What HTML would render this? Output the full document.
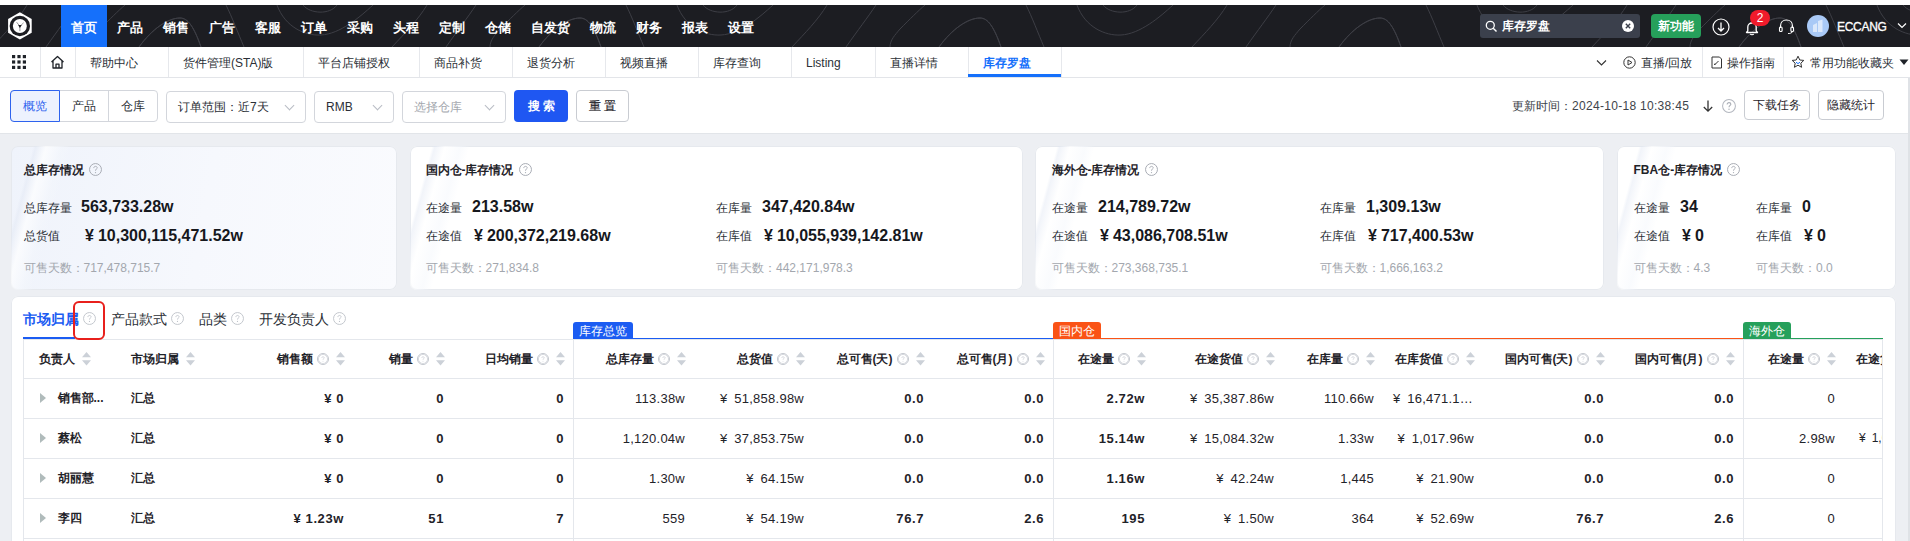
<!DOCTYPE html>
<html><head><meta charset="utf-8">
<style>
*{box-sizing:border-box;margin:0;padding:0}
html,body{width:1910px;height:541px;overflow:hidden}
body{position:relative;background:#edeff3;font-family:"Liberation Sans",sans-serif;color:#1f2329;font-size:12px}
.abs{position:absolute}
#top{left:0;top:0;width:1910px;height:5px;background:#fff}
#nav{left:0;top:5px;width:1910px;height:42px;background:#1c1d22;overflow:hidden}
#nav .items{position:absolute;left:61px;top:0;height:42px;display:flex}
#nav .items div{height:42px;line-height:45px;padding:0 10px;color:#fff;font-size:13px;font-weight:bold;white-space:nowrap}
#nav .items div.on{background:#1570fb}
#tabs{left:0;top:47px;width:1910px;height:31px;background:#fff;border-bottom:1px solid #e3e5e9}
#tabs .t{position:absolute;top:0;height:30px;line-height:32px;padding-left:15px;font-size:12px;color:#2b2f36;border-right:1px solid #e6e8ec;white-space:nowrap}
#tabs .t.on{color:#1570fb;font-weight:bold}
#filter{left:0;top:78px;width:1908px;height:56px;background:#fff;border-bottom:1px solid #e2e5e9}
#rstrip{left:1908px;top:78px;width:2px;height:541px;background:#dfe2e6}
.card{position:absolute;top:146px;height:144px;background:#fff;border-radius:7px;overflow:hidden;box-shadow:inset 0 0 0 1px #e6e9ee}
.card .ttl{position:absolute;left:15px;top:15px;font-size:12px;font-weight:bold;color:#1f2329;white-space:nowrap}
.lbl{position:absolute;font-size:12px;color:#2b2f36;white-space:nowrap}
.val{position:absolute;font-size:16px;font-weight:bold;color:#16181d;white-space:nowrap}
.sub{position:absolute;font-size:12px;color:#a3a7ae;white-space:nowrap}
.help{display:inline-block;width:12px;height:12px;border:1px solid #b9bdc5;border-radius:50%;font-size:9px;line-height:10px;text-align:center;color:#b9bdc5;vertical-align:middle;font-weight:normal}
.sel{height:32px;border:1px solid #d3d6dc;border-radius:4px;background:#fff;line-height:30px;padding-left:11px;font-size:12px;color:#2b2f36;white-space:nowrap}
.sel:after{content:"";position:absolute;right:12px;top:10px;width:6px;height:6px;border-right:1px solid #b8bcc4;border-bottom:1px solid #b8bcc4;transform:rotate(45deg)}
.btn{height:30px;border:1px solid #c9ccd2;border-radius:4px;background:#fff;line-height:28px;text-align:center;font-size:12px;color:#1f2329}
.lbl,.sub,.ttl{line-height:16px}
.val{line-height:20px}
.streak{position:absolute;left:22px;top:0;width:38px;height:144px;transform:skewX(-15deg);transform-origin:0 0;background:linear-gradient(90deg,rgba(225,231,243,0) 0%,rgba(225,231,243,.45) 8%,rgba(255,255,255,.7) 35%,rgba(244,247,252,.5) 75%,rgba(225,231,243,0) 100%)}
.tclip{position:absolute;overflow:hidden}
.th{position:absolute;top:0;height:39px;padding-top:1px;display:flex;align-items:center;font-size:12px;font-weight:bold;color:#1f2329;white-space:nowrap}
.th.l{padding-left:16px}
.th.r{justify-content:flex-end;padding-right:8px}
.th .srt{margin-left:7px}
.hq{display:inline-block;width:12px;height:12px;border:1px solid #c3c7ce;border-radius:50%;position:relative;margin-left:4.5px}
.hq:after{content:"?";position:absolute;left:0;top:0;width:10px;height:10px;font-size:8px;line-height:10px;text-align:center;color:#b5bac2;font-weight:normal}
.hq.big{position:absolute;width:13px;height:13px;margin:0}
.hq.big:after{width:11px;height:11px;line-height:11px;font-size:9px}
.td{position:absolute;height:40px;line-height:41px;font-size:13px;color:#1f2329;white-space:nowrap;overflow:hidden;text-overflow:ellipsis}
.td.b{font-weight:bold}
.td.r{text-align:right;padding-right:9px;padding-left:10px}
.td.l{padding-left:16px;font-size:12px}
.tri{display:inline-block;width:0;height:0;border-left:6px solid #b0bbbb;border-top:5px solid transparent;border-bottom:5px solid transparent;margin-left:1px;margin-right:11.5px;vertical-align:-1px}
.hl{position:absolute;left:0;width:100%;height:1px;background:#e4e7ec}
.vl{position:absolute;top:0;width:1px;height:100%;background:#e4e7ec}
.gtag{position:absolute;top:26px;height:17px;line-height:19px;padding:0 6px;color:#fff;font-size:12px;border-radius:3px 3px 0 0;white-space:nowrap}
.gline{position:absolute;top:41.5px;height:1.5px}
.ttab{position:absolute;top:15px;line-height:16px;font-size:14px;color:#2b2f36;white-space:nowrap}
.ttab.on{color:#1b5cf2;font-weight:bold}
.redbox{position:absolute;width:31.5px;height:39.5px;border:2.6px solid #e8201c;border-radius:6px}
.hq{margin-left:4.5px;display:block}
.hqb{position:absolute}
.hc{margin-left:5px;vertical-align:-2px}
.td.r{letter-spacing:0.25px}
.td.r.b{letter-spacing:0.6px}
.yen{margin-right:4px}
</style></head><body>
<div id="top" class="abs"></div>
<div id="nav" class="abs">
  <svg class="abs" style="left:0;top:0" width="1910" height="42" viewBox="0 0 1910 42" fill="none" stroke="#3d3e45" stroke-width="1">
    <defs><g id="tile">
      <path d="M359 42 C372 24 388 13 400 13 C408 13 414 22 421 42"/>
      <path d="M-41 42 C-28 24 -12 13 0 13 C8 13 14 22 21 42"/>
      <path d="M46 0 C52 12 58 28 64 42"/>
      <path d="M123 0 C130 9 150 10 157 0"/>
      <path d="M97 0 C105 22 125 31 141 30 C160 29 180 12 193 0"/>
      <path d="M212 42 C225 28 238 15 247 0"/>
      <path d="M266 42 C278 25 288 12 296 0"/>
      <path d="M310 42 C310 35 315 30 320 24 C330 14 338 6 345 0"/>
    </g></defs>
    <use href="#tile" x="-620"/><use href="#tile" x="-220"/><use href="#tile" x="180"/><use href="#tile" x="580"/><use href="#tile" x="980"/><use href="#tile" x="1380"/><use href="#tile" x="1780"/>
  </svg>
  <svg class="abs" style="left:0;top:0" width="40" height="42" viewBox="0 0 40 42">
    <polygon points="19.9,7.3 31.7,14.1 31.7,27.7 19.9,34.5 8.1,27.7 8.1,14.1" fill="#fff"/>
    <circle cx="19.85" cy="21" r="10.2" fill="#1c1d22"/>
    <circle cx="19.85" cy="21" r="7" fill="#fff"/>
    <path d="M19.9 21.3 L16.6 17.2 M19.9 21.3 L23.6 17.8 M19.9 21.3 L19.9 26.2" stroke="#1c1d22" stroke-width="0.9" stroke-opacity="0.5" fill="none"/>
    <polygon points="18.2,20 21.7,20 19.9,23" fill="#1c1d22"/>
  </svg>
  <div class="items">
    <div class="on">首页</div><div>产品</div><div>销售</div><div>广告</div><div>客服</div><div>订单</div><div>采购</div><div>头程</div><div>定制</div><div>仓储</div><div>自发货</div><div>物流</div><div>财务</div><div>报表</div><div>设置</div>
  </div>
</div>
<div id="navr" class="abs" style="left:0;top:5px;width:1910px;height:42px">
  <div class="abs" style="left:1480px;top:9px;width:160px;height:24px;background:#3b404c;border-radius:3px"></div>
  <svg class="abs" style="left:1485px;top:15px" width="13" height="13" viewBox="0 0 13 13"><circle cx="5.3" cy="5.3" r="4" fill="none" stroke="#fff" stroke-width="1.3"/><path d="M8.2 8.2 L11.5 11.5" stroke="#fff" stroke-width="1.4"/></svg>
  <div class="abs" style="left:1502px;top:13px;font-size:12px;color:#fff;line-height:16px;font-weight:bold">库存罗盘</div>
  <svg class="abs" style="left:1621px;top:14px" width="14" height="14" viewBox="0 0 14 14"><circle cx="7" cy="7" r="6" fill="#fff"/><path d="M4.8 4.8 L9.2 9.2 M9.2 4.8 L4.8 9.2" stroke="#3b404c" stroke-width="1.4"/></svg>
  <div class="abs" style="left:1651px;top:9px;width:50px;height:24px;background:#26a05b;border-radius:4px;color:#fff;font-size:12px;line-height:24px;text-align:center;font-weight:bold">新功能</div>
  <svg class="abs" style="left:1712px;top:13px" width="18" height="18" viewBox="0 0 18 18"><circle cx="9" cy="9" r="8" fill="none" stroke="#fff" stroke-width="1.2"/><path d="M9 4.5 V13 M6 10 L9 13 L12 10" fill="none" stroke="#fff" stroke-width="1.3"/></svg>
  <svg class="abs" style="left:1744px;top:15px" width="16" height="16" viewBox="0 0 16 16"><path d="M2.5 12.5 H13.5 L12.2 10.8 V7 C12.2 4.6 10.5 3 8 3 C5.5 3 3.8 4.6 3.8 7 V10.8 Z" fill="none" stroke="#fff" stroke-width="1.3" stroke-linejoin="round"/><path d="M6.3 14 C6.8 15 9.2 15 9.7 14" fill="none" stroke="#fff" stroke-width="1.2"/></svg>
  <div class="abs" style="left:1750px;top:5px;width:20px;height:16px;background:#f01b2b;border-radius:8px;color:#fff;font-size:12px;line-height:16px;text-align:center">2</div>
  <svg class="abs" style="left:1778px;top:13px" width="17" height="17" viewBox="0 0 17 17"><path d="M2.5 10 V8 C2.5 4.5 5 2 8.5 2 C12 2 14.5 4.5 14.5 8 V10" fill="none" stroke="#fff" stroke-width="1.2"/><rect x="1.5" y="9" width="2.6" height="4.5" rx="1" fill="none" stroke="#fff" stroke-width="1.1"/><rect x="12.9" y="9" width="2.6" height="4.5" rx="1" fill="none" stroke="#fff" stroke-width="1.1"/><path d="M14.2 13.5 C14 15 12 15.5 10 15.5" fill="none" stroke="#fff" stroke-width="1.1"/></svg>
  <svg class="abs" style="left:1807px;top:10px" width="22" height="22" viewBox="0 0 22 22"><circle cx="11" cy="11" r="11" fill="#a9c9f6"/><path d="M6 17 V10 L10 8 V17 Z M11 17 V6 L15.5 4.5 V17 Z" fill="#dbe8fb"/></svg>
  <div class="abs" style="left:1837px;top:14px;font-size:12px;letter-spacing:-0.3px;color:#fff;line-height:16px;-webkit-text-stroke:0.3px #fff">ECCANG</div>
  <svg class="abs" style="left:1897px;top:17px" width="10" height="8" viewBox="0 0 10 8"><path d="M1 1.5 L5 5.5 L9 1.5" fill="none" stroke="#fff" stroke-width="1.2"/></svg>
</div>
<div id="tabs" class="abs">
  <div class="t" style="left:0px;width:41px"></div>
  <div class="t" style="left:40px;width:36px"></div>
  <div class="t" style="left:75px;width:94px">帮助中心</div>
  <div class="t" style="left:168px;width:136px">货件管理(STA)版</div>
  <div class="t" style="left:303px;width:117px">平台店铺授权</div>
  <div class="t" style="left:419px;width:94px">商品补货</div>
  <div class="t" style="left:512px;width:94px">退货分析</div>
  <div class="t" style="left:605px;width:94px">视频直播</div>
  <div class="t" style="left:698px;width:94px">库存查询</div>
  <div class="t" style="left:791px;width:85px">Listing</div>
  <div class="t" style="left:875px;width:94px">直播详情</div>
  <div class="t on" style="left:968px;width:94px">库存罗盘</div>
</div>
<div id="tabsx" class="abs" style="left:0;top:47px;width:1910px;height:31px">
  <svg class="abs" style="left:12px;top:8px" width="14" height="14" viewBox="0 0 14 14" fill="#1f2329"><rect x="0" y="0" width="3.2" height="3.2"/><rect x="5.4" y="0" width="3.2" height="3.2"/><rect x="10.8" y="0" width="3.2" height="3.2"/><rect x="0" y="5.4" width="3.2" height="3.2"/><rect x="5.4" y="5.4" width="3.2" height="3.2"/><rect x="10.8" y="5.4" width="3.2" height="3.2"/><rect x="0" y="10.8" width="3.2" height="3.2"/><rect x="5.4" y="10.8" width="3.2" height="3.2"/><rect x="10.8" y="10.8" width="3.2" height="3.2"/></svg>
  <svg class="abs" style="left:50px;top:8px" width="15" height="14" viewBox="0 0 15 14"><path d="M1.5 7 L7.5 1.5 L13.5 7 M3 5.8 V13 H12 V5.8 M6 13 V9.2 H9 V13" fill="none" stroke="#1f2329" stroke-width="1.3" stroke-linejoin="round"/></svg>
  <div class="abs" style="left:968px;top:27px;width:93px;height:3px;background:#1570fb"></div>
  <svg class="abs" style="left:1596px;top:12px" width="11" height="8" viewBox="0 0 11 8"><path d="M1 1.5 L5.5 6 L10 1.5" fill="none" stroke="#333" stroke-width="1.1"/></svg>
  <svg class="abs" style="left:1623px;top:9px" width="13" height="13" viewBox="0 0 13 13"><circle cx="6.5" cy="6.5" r="5.7" fill="none" stroke="#333" stroke-width="1"/><path d="M5 4 L9 6.5 L5 9 Z" fill="none" stroke="#333" stroke-width="1"/></svg>
  <div class="abs" style="left:1641px;top:8px;font-size:12px;color:#2b2f36;line-height:16px">直播/回放</div>
  <div class="abs" style="left:1702px;top:0;width:1px;height:30px;background:#e6e8ec"></div>
  <svg class="abs" style="left:1710px;top:9px" width="13" height="13" viewBox="0 0 13 13"><path d="M2 1 H9.5 L11.5 3 V12 H2 Z" fill="none" stroke="#333" stroke-width="1"/><path d="M4.5 9 L8.5 5 M4.5 9 L5 7.5" fill="none" stroke="#333" stroke-width="1"/></svg>
  <div class="abs" style="left:1727px;top:8px;font-size:12px;color:#2b2f36;line-height:16px">操作指南</div>
  <div class="abs" style="left:1783px;top:0;width:1px;height:30px;background:#e6e8ec"></div>
  <svg class="abs" style="left:1791px;top:8px" width="14" height="14" viewBox="0 0 14 14"><path d="M7 1.2 L8.8 5 L12.8 5.4 L9.8 8.2 L10.6 12.3 L7 10.2 L3.4 12.3 L4.2 8.2 L1.2 5.4 L5.2 5 Z" fill="none" stroke="#333" stroke-width="1" stroke-linejoin="round"/><path d="M5 7.2 L7 8.6 L9 7.2" fill="none" stroke="#1570fb" stroke-width="1"/></svg>
  <div class="abs" style="left:1810px;top:8px;font-size:12px;color:#2b2f36;line-height:16px">常用功能收藏夹</div>
  <svg class="abs" style="left:1899px;top:12px" width="10" height="7" viewBox="0 0 10 7"><path d="M0.5 0.5 H9.5 L5 6 Z" fill="#1f2329"/></svg>
</div>
<div id="filter" class="abs">
  <div class="abs" style="left:10px;top:12px;width:148px;height:32px;border:1px solid #d3d6dc;border-radius:4px;background:#fff"></div>
  <div class="abs" style="left:10px;top:12px;width:50px;height:32px;border:1px solid #2e63ee;border-radius:4px 0 0 4px;background:#edf2fe;color:#2e63ee;text-align:center;line-height:30px;font-size:12px">概览</div>
  <div class="abs" style="left:60px;top:13px;width:48px;height:30px;color:#2b2f36;text-align:center;line-height:30px;font-size:12px">产品</div>
  <div class="abs" style="left:108px;top:13px;width:1px;height:30px;background:#d3d6dc"></div>
  <div class="abs" style="left:109px;top:13px;width:48px;height:30px;color:#2b2f36;text-align:center;line-height:30px;font-size:12px">仓库</div>
  <div class="abs sel" style="left:166px;top:13px;width:140px">订单范围：近7天</div>
  <div class="abs sel" style="left:314px;top:13px;width:80px">RMB</div>
  <div class="abs sel" style="left:402px;top:13px;width:104px;color:#a3a7ae">选择仓库</div>
  <div class="abs" style="left:514px;top:12px;width:54px;height:32px;background:#1f57f2;border-radius:4px;color:#fff;text-align:center;line-height:32px;font-size:12px;font-weight:bold;letter-spacing:3px;text-indent:3px">搜索</div>
  <div class="abs" style="left:576px;top:12px;width:53px;height:32px;border:1px solid #c9ccd2;border-radius:4px;color:#1f2329;text-align:center;line-height:30px;font-size:12px;letter-spacing:3px;text-indent:3px;-webkit-text-stroke:0.2px #1f2329">重置</div>
  <div class="abs" style="left:1512px;top:20px;font-size:12px;color:#40444b;line-height:16px">更新时间：<span style="letter-spacing:0.3px">2024-10-18 10:38:45</span></div>
  <svg class="abs" style="left:1702px;top:21px" width="12" height="14" viewBox="0 0 12 14"><path d="M6 1.5 V12 M1.8 8 L6 12.2 L10.2 8" fill="none" stroke="#333" stroke-width="1.3"/></svg>
  <svg class="abs" style="left:1722px;top:21px" width="14" height="14" viewBox="0 0 12 12"><circle cx="6" cy="6" r="5.5" fill="none" stroke="#b3b7bf" stroke-width="0.86"/><path d="M4.4 4.7 C4.4 3.7 5.1 3.1 6 3.1 C6.9 3.1 7.6 3.7 7.6 4.5 C7.6 5.5 6 5.6 6 7.1" fill="none" stroke="#a9adb5" stroke-width="0.9"/><circle cx="6" cy="8.8" r="0.6" fill="#a9adb5"/></svg>
  <div class="abs btn" style="left:1744px;top:12px;width:66px">下载任务</div>
  <div class="abs btn" style="left:1818px;top:12px;width:66px">隐藏统计</div>
</div>
<div id="rstrip" class="abs"></div>

<div class="card" style="left:11px;width:386px;background:linear-gradient(100deg,#eff3fb 0%,#f6f8fd 50%,#fafbfe 100%)">
  <div class="streak"></div>
  <div class="ttl" style="left:12.5px;top:15.5px">总库存情况<svg class="hc" style="" width="13" height="13" viewBox="0 0 12 12"><circle cx="6" cy="6" r="5.5" fill="none" stroke="#a9adb5" stroke-width="0.92"/><path d="M4.4 4.7 C4.4 3.7 5.1 3.1 6 3.1 C6.9 3.1 7.6 3.7 7.6 4.5 C7.6 5.5 6 5.6 6 7.1" fill="none" stroke="#a9adb5" stroke-width="0.9"/><circle cx="6" cy="8.8" r="0.6" fill="#a9adb5"/></svg></div>
  <div class="lbl" style="left:12.5px;top:54px">总库存量</div><div class="val" style="left:70px;top:51px">563,733.28w</div>
  <div class="lbl" style="left:12.5px;top:82px">总货值</div><div class="val" style="left:74px;top:79.5px"><span class="yen">¥</span>10,300,115,471.52w</div>
  <div class="sub" style="left:12.5px;top:114px">可售天数：717,478,715.7</div>
</div>
<div class="card" style="left:410px;width:613px">
  <div class="streak"></div>
  <div class="ttl" style="left:15.5px;top:15.5px">国内仓-库存情况<svg class="hc" style="" width="13" height="13" viewBox="0 0 12 12"><circle cx="6" cy="6" r="5.5" fill="none" stroke="#a9adb5" stroke-width="0.92"/><path d="M4.4 4.7 C4.4 3.7 5.1 3.1 6 3.1 C6.9 3.1 7.6 3.7 7.6 4.5 C7.6 5.5 6 5.6 6 7.1" fill="none" stroke="#a9adb5" stroke-width="0.9"/><circle cx="6" cy="8.8" r="0.6" fill="#a9adb5"/></svg></div>
  <div class="lbl" style="left:15.5px;top:54px">在途量</div><div class="val" style="left:62px;top:51px">213.58w</div>
  <div class="lbl" style="left:15.5px;top:82px">在途值</div><div class="val" style="left:64px;top:79.5px"><span class="yen">¥</span>200,372,219.68w</div>
  <div class="sub" style="left:15.5px;top:114px">可售天数：271,834.8</div>
  <div class="lbl" style="left:306px;top:54px">在库量</div><div class="val" style="left:352px;top:51px">347,420.84w</div>
  <div class="lbl" style="left:306px;top:82px">在库值</div><div class="val" style="left:354px;top:79.5px"><span class="yen">¥</span>10,055,939,142.81w</div>
  <div class="sub" style="left:306px;top:114px">可售天数：442,171,978.3</div>
</div>
<div class="card" style="left:1035px;width:569px">
  <div class="streak"></div>
  <div class="ttl" style="left:16.5px;top:15.5px">海外仓-库存情况<svg class="hc" style="" width="13" height="13" viewBox="0 0 12 12"><circle cx="6" cy="6" r="5.5" fill="none" stroke="#a9adb5" stroke-width="0.92"/><path d="M4.4 4.7 C4.4 3.7 5.1 3.1 6 3.1 C6.9 3.1 7.6 3.7 7.6 4.5 C7.6 5.5 6 5.6 6 7.1" fill="none" stroke="#a9adb5" stroke-width="0.9"/><circle cx="6" cy="8.8" r="0.6" fill="#a9adb5"/></svg></div>
  <div class="lbl" style="left:16.5px;top:54px">在途量</div><div class="val" style="left:63px;top:51px">214,789.72w</div>
  <div class="lbl" style="left:16.5px;top:82px">在途值</div><div class="val" style="left:65px;top:79.5px"><span class="yen">¥</span>43,086,708.51w</div>
  <div class="sub" style="left:16.5px;top:114px">可售天数：273,368,735.1</div>
  <div class="lbl" style="left:284.5px;top:54px">在库量</div><div class="val" style="left:331px;top:51px">1,309.13w</div>
  <div class="lbl" style="left:284.5px;top:82px">在库值</div><div class="val" style="left:333px;top:79.5px"><span class="yen">¥</span>717,400.53w</div>
  <div class="sub" style="left:284.5px;top:114px">可售天数：1,666,163.2</div>
</div>
<div class="card" style="left:1617px;width:279px">
  <div class="streak"></div>
  <div class="ttl" style="left:16.5px;top:15.5px">FBA仓-库存情况<svg class="hc" style="" width="13" height="13" viewBox="0 0 12 12"><circle cx="6" cy="6" r="5.5" fill="none" stroke="#a9adb5" stroke-width="0.92"/><path d="M4.4 4.7 C4.4 3.7 5.1 3.1 6 3.1 C6.9 3.1 7.6 3.7 7.6 4.5 C7.6 5.5 6 5.6 6 7.1" fill="none" stroke="#a9adb5" stroke-width="0.9"/><circle cx="6" cy="8.8" r="0.6" fill="#a9adb5"/></svg></div>
  <div class="lbl" style="left:16.5px;top:54px">在途量</div><div class="val" style="left:63px;top:51px">34</div>
  <div class="lbl" style="left:16.5px;top:82px">在途值</div><div class="val" style="left:65px;top:79.5px"><span class="yen">¥</span>0</div>
  <div class="sub" style="left:16.5px;top:114px">可售天数：4.3</div>
  <div class="lbl" style="left:139px;top:54px">在库量</div><div class="val" style="left:185px;top:51px">0</div>
  <div class="lbl" style="left:139px;top:82px">在库值</div><div class="val" style="left:187px;top:79.5px"><span class="yen">¥</span>0</div>
  <div class="sub" style="left:139px;top:114px">可售天数：0.0</div>
</div>

<div class="card" id="tcard" style="left:11px;top:296px;width:1885px;height:260px">
<div class="tclip" style="left:12.0px;top:43.0px;width:1860.0px;height:202.0px">
<div class="th l" style="left:0.0px;width:92.0px"><span class="ht">负责人</span><svg class="srt" width="9" height="14" viewBox="0 0 9 14"><path d="M4.5 0 L9 5.2 H0 Z M0 8.2 H9 L4.5 13.4 Z" fill="#ccd1d8"/></svg></div>
<div class="th l" style="left:92.0px;width:118.0px"><span class="ht">市场归属</span><svg class="srt" width="9" height="14" viewBox="0 0 9 14"><path d="M4.5 0 L9 5.2 H0 Z M0 8.2 H9 L4.5 13.4 Z" fill="#ccd1d8"/></svg></div>
<div class="th r" style="left:210.0px;width:120.0px"><span class="ht">销售额</span><svg class="hq" width="12" height="12" viewBox="0 0 12 12"><circle cx="6" cy="6" r="5.5" fill="none" stroke="#c8ccd3" stroke-width="0.9"/><path d="M4.5 4.7 C4.5 3.8 5.1 3.2 6 3.2 C6.9 3.2 7.5 3.8 7.5 4.5 C7.5 5.4 6 5.6 6 7" fill="none" stroke="#c8ccd3" stroke-width="0.8"/><circle cx="6" cy="8.7" r="0.55" fill="#c8ccd3"/></svg><svg class="srt" width="9" height="14" viewBox="0 0 9 14"><path d="M4.5 0 L9 5.2 H0 Z M0 8.2 H9 L4.5 13.4 Z" fill="#ccd1d8"/></svg></div>
<div class="th r" style="left:330.0px;width:100.0px"><span class="ht">销量</span><svg class="hq" width="12" height="12" viewBox="0 0 12 12"><circle cx="6" cy="6" r="5.5" fill="none" stroke="#c8ccd3" stroke-width="0.9"/><path d="M4.5 4.7 C4.5 3.8 5.1 3.2 6 3.2 C6.9 3.2 7.5 3.8 7.5 4.5 C7.5 5.4 6 5.6 6 7" fill="none" stroke="#c8ccd3" stroke-width="0.8"/><circle cx="6" cy="8.7" r="0.55" fill="#c8ccd3"/></svg><svg class="srt" width="9" height="14" viewBox="0 0 9 14"><path d="M4.5 0 L9 5.2 H0 Z M0 8.2 H9 L4.5 13.4 Z" fill="#ccd1d8"/></svg></div>
<div class="th r" style="left:430.0px;width:120.0px"><span class="ht">日均销量</span><svg class="hq" width="12" height="12" viewBox="0 0 12 12"><circle cx="6" cy="6" r="5.5" fill="none" stroke="#c8ccd3" stroke-width="0.9"/><path d="M4.5 4.7 C4.5 3.8 5.1 3.2 6 3.2 C6.9 3.2 7.5 3.8 7.5 4.5 C7.5 5.4 6 5.6 6 7" fill="none" stroke="#c8ccd3" stroke-width="0.8"/><circle cx="6" cy="8.7" r="0.55" fill="#c8ccd3"/></svg><svg class="srt" width="9" height="14" viewBox="0 0 9 14"><path d="M4.5 0 L9 5.2 H0 Z M0 8.2 H9 L4.5 13.4 Z" fill="#ccd1d8"/></svg></div>
<div class="th r" style="left:550.0px;width:121.0px"><span class="ht">总库存量</span><svg class="hq" width="12" height="12" viewBox="0 0 12 12"><circle cx="6" cy="6" r="5.5" fill="none" stroke="#c8ccd3" stroke-width="0.9"/><path d="M4.5 4.7 C4.5 3.8 5.1 3.2 6 3.2 C6.9 3.2 7.5 3.8 7.5 4.5 C7.5 5.4 6 5.6 6 7" fill="none" stroke="#c8ccd3" stroke-width="0.8"/><circle cx="6" cy="8.7" r="0.55" fill="#c8ccd3"/></svg><svg class="srt" width="9" height="14" viewBox="0 0 9 14"><path d="M4.5 0 L9 5.2 H0 Z M0 8.2 H9 L4.5 13.4 Z" fill="#ccd1d8"/></svg></div>
<div class="th r" style="left:671.0px;width:119.0px"><span class="ht">总货值</span><svg class="hq" width="12" height="12" viewBox="0 0 12 12"><circle cx="6" cy="6" r="5.5" fill="none" stroke="#c8ccd3" stroke-width="0.9"/><path d="M4.5 4.7 C4.5 3.8 5.1 3.2 6 3.2 C6.9 3.2 7.5 3.8 7.5 4.5 C7.5 5.4 6 5.6 6 7" fill="none" stroke="#c8ccd3" stroke-width="0.8"/><circle cx="6" cy="8.7" r="0.55" fill="#c8ccd3"/></svg><svg class="srt" width="9" height="14" viewBox="0 0 9 14"><path d="M4.5 0 L9 5.2 H0 Z M0 8.2 H9 L4.5 13.4 Z" fill="#ccd1d8"/></svg></div>
<div class="th r" style="left:790.0px;width:120.0px"><span class="ht">总可售(天)</span><svg class="hq" width="12" height="12" viewBox="0 0 12 12"><circle cx="6" cy="6" r="5.5" fill="none" stroke="#c8ccd3" stroke-width="0.9"/><path d="M4.5 4.7 C4.5 3.8 5.1 3.2 6 3.2 C6.9 3.2 7.5 3.8 7.5 4.5 C7.5 5.4 6 5.6 6 7" fill="none" stroke="#c8ccd3" stroke-width="0.8"/><circle cx="6" cy="8.7" r="0.55" fill="#c8ccd3"/></svg><svg class="srt" width="9" height="14" viewBox="0 0 9 14"><path d="M4.5 0 L9 5.2 H0 Z M0 8.2 H9 L4.5 13.4 Z" fill="#ccd1d8"/></svg></div>
<div class="th r" style="left:910.0px;width:120.0px"><span class="ht">总可售(月)</span><svg class="hq" width="12" height="12" viewBox="0 0 12 12"><circle cx="6" cy="6" r="5.5" fill="none" stroke="#c8ccd3" stroke-width="0.9"/><path d="M4.5 4.7 C4.5 3.8 5.1 3.2 6 3.2 C6.9 3.2 7.5 3.8 7.5 4.5 C7.5 5.4 6 5.6 6 7" fill="none" stroke="#c8ccd3" stroke-width="0.8"/><circle cx="6" cy="8.7" r="0.55" fill="#c8ccd3"/></svg><svg class="srt" width="9" height="14" viewBox="0 0 9 14"><path d="M4.5 0 L9 5.2 H0 Z M0 8.2 H9 L4.5 13.4 Z" fill="#ccd1d8"/></svg></div>
<div class="th r" style="left:1030.0px;width:101.0px"><span class="ht">在途量</span><svg class="hq" width="12" height="12" viewBox="0 0 12 12"><circle cx="6" cy="6" r="5.5" fill="none" stroke="#c8ccd3" stroke-width="0.9"/><path d="M4.5 4.7 C4.5 3.8 5.1 3.2 6 3.2 C6.9 3.2 7.5 3.8 7.5 4.5 C7.5 5.4 6 5.6 6 7" fill="none" stroke="#c8ccd3" stroke-width="0.8"/><circle cx="6" cy="8.7" r="0.55" fill="#c8ccd3"/></svg><svg class="srt" width="9" height="14" viewBox="0 0 9 14"><path d="M4.5 0 L9 5.2 H0 Z M0 8.2 H9 L4.5 13.4 Z" fill="#ccd1d8"/></svg></div>
<div class="th r" style="left:1131.0px;width:129.0px"><span class="ht">在途货值</span><svg class="hq" width="12" height="12" viewBox="0 0 12 12"><circle cx="6" cy="6" r="5.5" fill="none" stroke="#c8ccd3" stroke-width="0.9"/><path d="M4.5 4.7 C4.5 3.8 5.1 3.2 6 3.2 C6.9 3.2 7.5 3.8 7.5 4.5 C7.5 5.4 6 5.6 6 7" fill="none" stroke="#c8ccd3" stroke-width="0.8"/><circle cx="6" cy="8.7" r="0.55" fill="#c8ccd3"/></svg><svg class="srt" width="9" height="14" viewBox="0 0 9 14"><path d="M4.5 0 L9 5.2 H0 Z M0 8.2 H9 L4.5 13.4 Z" fill="#ccd1d8"/></svg></div>
<div class="th r" style="left:1260.0px;width:100.0px"><span class="ht">在库量</span><svg class="hq" width="12" height="12" viewBox="0 0 12 12"><circle cx="6" cy="6" r="5.5" fill="none" stroke="#c8ccd3" stroke-width="0.9"/><path d="M4.5 4.7 C4.5 3.8 5.1 3.2 6 3.2 C6.9 3.2 7.5 3.8 7.5 4.5 C7.5 5.4 6 5.6 6 7" fill="none" stroke="#c8ccd3" stroke-width="0.8"/><circle cx="6" cy="8.7" r="0.55" fill="#c8ccd3"/></svg><svg class="srt" width="9" height="14" viewBox="0 0 9 14"><path d="M4.5 0 L9 5.2 H0 Z M0 8.2 H9 L4.5 13.4 Z" fill="#ccd1d8"/></svg></div>
<div class="th r" style="left:1360.0px;width:100.0px"><span class="ht">在库货值</span><svg class="hq" width="12" height="12" viewBox="0 0 12 12"><circle cx="6" cy="6" r="5.5" fill="none" stroke="#c8ccd3" stroke-width="0.9"/><path d="M4.5 4.7 C4.5 3.8 5.1 3.2 6 3.2 C6.9 3.2 7.5 3.8 7.5 4.5 C7.5 5.4 6 5.6 6 7" fill="none" stroke="#c8ccd3" stroke-width="0.8"/><circle cx="6" cy="8.7" r="0.55" fill="#c8ccd3"/></svg><svg class="srt" width="9" height="14" viewBox="0 0 9 14"><path d="M4.5 0 L9 5.2 H0 Z M0 8.2 H9 L4.5 13.4 Z" fill="#ccd1d8"/></svg></div>
<div class="th r" style="left:1460.0px;width:130.0px"><span class="ht">国内可售(天)</span><svg class="hq" width="12" height="12" viewBox="0 0 12 12"><circle cx="6" cy="6" r="5.5" fill="none" stroke="#c8ccd3" stroke-width="0.9"/><path d="M4.5 4.7 C4.5 3.8 5.1 3.2 6 3.2 C6.9 3.2 7.5 3.8 7.5 4.5 C7.5 5.4 6 5.6 6 7" fill="none" stroke="#c8ccd3" stroke-width="0.8"/><circle cx="6" cy="8.7" r="0.55" fill="#c8ccd3"/></svg><svg class="srt" width="9" height="14" viewBox="0 0 9 14"><path d="M4.5 0 L9 5.2 H0 Z M0 8.2 H9 L4.5 13.4 Z" fill="#ccd1d8"/></svg></div>
<div class="th r" style="left:1590.0px;width:130.0px"><span class="ht">国内可售(月)</span><svg class="hq" width="12" height="12" viewBox="0 0 12 12"><circle cx="6" cy="6" r="5.5" fill="none" stroke="#c8ccd3" stroke-width="0.9"/><path d="M4.5 4.7 C4.5 3.8 5.1 3.2 6 3.2 C6.9 3.2 7.5 3.8 7.5 4.5 C7.5 5.4 6 5.6 6 7" fill="none" stroke="#c8ccd3" stroke-width="0.8"/><circle cx="6" cy="8.7" r="0.55" fill="#c8ccd3"/></svg><svg class="srt" width="9" height="14" viewBox="0 0 9 14"><path d="M4.5 0 L9 5.2 H0 Z M0 8.2 H9 L4.5 13.4 Z" fill="#ccd1d8"/></svg></div>
<div class="th r" style="left:1720.0px;width:101.0px"><span class="ht">在途量</span><svg class="hq" width="12" height="12" viewBox="0 0 12 12"><circle cx="6" cy="6" r="5.5" fill="none" stroke="#c8ccd3" stroke-width="0.9"/><path d="M4.5 4.7 C4.5 3.8 5.1 3.2 6 3.2 C6.9 3.2 7.5 3.8 7.5 4.5 C7.5 5.4 6 5.6 6 7" fill="none" stroke="#c8ccd3" stroke-width="0.8"/><circle cx="6" cy="8.7" r="0.55" fill="#c8ccd3"/></svg><svg class="srt" width="9" height="14" viewBox="0 0 9 14"><path d="M4.5 0 L9 5.2 H0 Z M0 8.2 H9 L4.5 13.4 Z" fill="#ccd1d8"/></svg></div>
<div class="th l" style="left:1821.0px;width:129.0px;padding-left:12px"><span class="ht">在途货值</span><svg class="hq" width="12" height="12" viewBox="0 0 12 12"><circle cx="6" cy="6" r="5.5" fill="none" stroke="#c8ccd3" stroke-width="0.9"/><path d="M4.5 4.7 C4.5 3.8 5.1 3.2 6 3.2 C6.9 3.2 7.5 3.8 7.5 4.5 C7.5 5.4 6 5.6 6 7" fill="none" stroke="#c8ccd3" stroke-width="0.8"/><circle cx="6" cy="8.7" r="0.55" fill="#c8ccd3"/></svg><svg class="srt" width="9" height="14" viewBox="0 0 9 14"><path d="M4.5 0 L9 5.2 H0 Z M0 8.2 H9 L4.5 13.4 Z" fill="#ccd1d8"/></svg></div>
<div class="td l b" style="left:0.0px;top:39px;width:92.0px"><span class="tri"></span>销售部...</div>
<div class="td l b" style="left:92.0px;top:39px;width:118.0px">汇总</div>
<div class="td b r" style="left:210.0px;top:39px;width:120.0px">¥ 0</div>
<div class="td b r" style="left:330.0px;top:39px;width:100.0px">0</div>
<div class="td b r" style="left:430.0px;top:39px;width:120.0px">0</div>
<div class="td r" style="left:550.0px;top:39px;width:121.0px">113.38w</div>
<div class="td r" style="left:671.0px;top:39px;width:119.0px">¥&ensp;51,858.98w</div>
<div class="td b r" style="left:790.0px;top:39px;width:120.0px">0.0</div>
<div class="td b r" style="left:910.0px;top:39px;width:120.0px">0.0</div>
<div class="td b r" style="left:1030.0px;top:39px;width:101.0px">2.72w</div>
<div class="td r" style="left:1131.0px;top:39px;width:129.0px">¥&ensp;35,387.86w</div>
<div class="td r" style="left:1260.0px;top:39px;width:100.0px">110.66w</div>
<div class="td r" style="left:1360.0px;top:39px;width:100.0px">¥&ensp;16,471.14w</div>
<div class="td b r" style="left:1460.0px;top:39px;width:130.0px">0.0</div>
<div class="td b r" style="left:1590.0px;top:39px;width:130.0px">0.0</div>
<div class="td r" style="left:1720.0px;top:39px;width:101.0px">0</div>
<div class="td l" style="left:1821.0px;top:39px;width:129.0px;padding-left:15px"></div>
<div class="td l b" style="left:0.0px;top:79px;width:92.0px"><span class="tri"></span>蔡松</div>
<div class="td l b" style="left:92.0px;top:79px;width:118.0px">汇总</div>
<div class="td b r" style="left:210.0px;top:79px;width:120.0px">¥ 0</div>
<div class="td b r" style="left:330.0px;top:79px;width:100.0px">0</div>
<div class="td b r" style="left:430.0px;top:79px;width:120.0px">0</div>
<div class="td r" style="left:550.0px;top:79px;width:121.0px">1,120.04w</div>
<div class="td r" style="left:671.0px;top:79px;width:119.0px">¥&ensp;37,853.75w</div>
<div class="td b r" style="left:790.0px;top:79px;width:120.0px">0.0</div>
<div class="td b r" style="left:910.0px;top:79px;width:120.0px">0.0</div>
<div class="td b r" style="left:1030.0px;top:79px;width:101.0px">15.14w</div>
<div class="td r" style="left:1131.0px;top:79px;width:129.0px">¥&ensp;15,084.32w</div>
<div class="td r" style="left:1260.0px;top:79px;width:100.0px">1.33w</div>
<div class="td r" style="left:1360.0px;top:79px;width:100.0px">¥&ensp;1,017.96w</div>
<div class="td b r" style="left:1460.0px;top:79px;width:130.0px">0.0</div>
<div class="td b r" style="left:1590.0px;top:79px;width:130.0px">0.0</div>
<div class="td r" style="left:1720.0px;top:79px;width:101.0px">2.98w</div>
<div class="td l" style="left:1821.0px;top:79px;width:129.0px;padding-left:15px">¥&ensp;1,017w</div>
<div class="td l b" style="left:0.0px;top:119px;width:92.0px"><span class="tri"></span>胡丽慧</div>
<div class="td l b" style="left:92.0px;top:119px;width:118.0px">汇总</div>
<div class="td b r" style="left:210.0px;top:119px;width:120.0px">¥ 0</div>
<div class="td b r" style="left:330.0px;top:119px;width:100.0px">0</div>
<div class="td b r" style="left:430.0px;top:119px;width:120.0px">0</div>
<div class="td r" style="left:550.0px;top:119px;width:121.0px">1.30w</div>
<div class="td r" style="left:671.0px;top:119px;width:119.0px">¥&ensp;64.15w</div>
<div class="td b r" style="left:790.0px;top:119px;width:120.0px">0.0</div>
<div class="td b r" style="left:910.0px;top:119px;width:120.0px">0.0</div>
<div class="td b r" style="left:1030.0px;top:119px;width:101.0px">1.16w</div>
<div class="td r" style="left:1131.0px;top:119px;width:129.0px">¥&ensp;42.24w</div>
<div class="td r" style="left:1260.0px;top:119px;width:100.0px">1,445</div>
<div class="td r" style="left:1360.0px;top:119px;width:100.0px">¥&ensp;21.90w</div>
<div class="td b r" style="left:1460.0px;top:119px;width:130.0px">0.0</div>
<div class="td b r" style="left:1590.0px;top:119px;width:130.0px">0.0</div>
<div class="td r" style="left:1720.0px;top:119px;width:101.0px">0</div>
<div class="td l" style="left:1821.0px;top:119px;width:129.0px;padding-left:15px"></div>
<div class="td l b" style="left:0.0px;top:159px;width:92.0px"><span class="tri"></span>李四</div>
<div class="td l b" style="left:92.0px;top:159px;width:118.0px">汇总</div>
<div class="td b r" style="left:210.0px;top:159px;width:120.0px">¥ 1.23w</div>
<div class="td b r" style="left:330.0px;top:159px;width:100.0px">51</div>
<div class="td b r" style="left:430.0px;top:159px;width:120.0px">7</div>
<div class="td r" style="left:550.0px;top:159px;width:121.0px">559</div>
<div class="td r" style="left:671.0px;top:159px;width:119.0px">¥&ensp;54.19w</div>
<div class="td b r" style="left:790.0px;top:159px;width:120.0px">76.7</div>
<div class="td b r" style="left:910.0px;top:159px;width:120.0px">2.6</div>
<div class="td b r" style="left:1030.0px;top:159px;width:101.0px">195</div>
<div class="td r" style="left:1131.0px;top:159px;width:129.0px">¥&ensp;1.50w</div>
<div class="td r" style="left:1260.0px;top:159px;width:100.0px">364</div>
<div class="td r" style="left:1360.0px;top:159px;width:100.0px">¥&ensp;52.69w</div>
<div class="td b r" style="left:1460.0px;top:159px;width:130.0px">76.7</div>
<div class="td b r" style="left:1590.0px;top:159px;width:130.0px">2.6</div>
<div class="td r" style="left:1720.0px;top:159px;width:101.0px">0</div>
<div class="td l" style="left:1821.0px;top:159px;width:129.0px;padding-left:15px"></div>
<div class="hl" style="top:39px"></div>
<div class="hl" style="top:79px"></div>
<div class="hl" style="top:119px"></div>
<div class="hl" style="top:159px"></div>
<div class="hl" style="top:199px"></div>
<div class="hl" style="top:0"></div>
<div class="vl" style="left:0.0px"></div>
<div class="vl" style="left:550.0px"></div>
<div class="vl" style="left:1030.0px"></div>
<div class="vl" style="left:1720.0px"></div>
<div class="vl" style="left:1859.0px"></div>
</div>
<div class="gtag" style="left:562.0px;background:#1b5cf2">库存总览</div>
<div class="gline" style="left:562.0px;width:480.0px;background:#1b5cf2"></div>
<div class="gtag" style="left:1042.0px;background:#fa5316">国内仓</div>
<div class="gline" style="left:1042.0px;width:690.0px;background:#fa5316"></div>
<div class="gtag" style="left:1732.0px;background:#26a05b">海外仓</div>
<div class="gline" style="left:1732.0px;width:140.0px;background:#26a05b"></div>
<div class="ttab on" style="left:11.8px">市场归属</div>
<svg class="hqb" style="left:72.0px;top:16px" width="13" height="13" viewBox="0 0 12 12"><circle cx="6" cy="6" r="5.5" fill="none" stroke="#bfc3ca" stroke-width="0.85"/><path d="M4.5 4.7 C4.5 3.8 5.1 3.2 6 3.2 C6.9 3.2 7.5 3.8 7.5 4.5 C7.5 5.4 6 5.6 6 7" fill="none" stroke="#bfc3ca" stroke-width="0.8"/><circle cx="6" cy="8.7" r="0.55" fill="#bfc3ca"/></svg>
<div class="ttab" style="left:99.5px">产品款式</div>
<svg class="hqb" style="left:160.0px;top:16px" width="13" height="13" viewBox="0 0 12 12"><circle cx="6" cy="6" r="5.5" fill="none" stroke="#bfc3ca" stroke-width="0.85"/><path d="M4.5 4.7 C4.5 3.8 5.1 3.2 6 3.2 C6.9 3.2 7.5 3.8 7.5 4.5 C7.5 5.4 6 5.6 6 7" fill="none" stroke="#bfc3ca" stroke-width="0.8"/><circle cx="6" cy="8.7" r="0.55" fill="#bfc3ca"/></svg>
<div class="ttab" style="left:188.4px">品类</div>
<svg class="hqb" style="left:220.0px;top:16px" width="13" height="13" viewBox="0 0 12 12"><circle cx="6" cy="6" r="5.5" fill="none" stroke="#bfc3ca" stroke-width="0.85"/><path d="M4.5 4.7 C4.5 3.8 5.1 3.2 6 3.2 C6.9 3.2 7.5 3.8 7.5 4.5 C7.5 5.4 6 5.6 6 7" fill="none" stroke="#bfc3ca" stroke-width="0.8"/><circle cx="6" cy="8.7" r="0.55" fill="#bfc3ca"/></svg>
<div class="ttab" style="left:247.7px">开发负责人</div>
<svg class="hqb" style="left:322.0px;top:16px" width="13" height="13" viewBox="0 0 12 12"><circle cx="6" cy="6" r="5.5" fill="none" stroke="#bfc3ca" stroke-width="0.85"/><path d="M4.5 4.7 C4.5 3.8 5.1 3.2 6 3.2 C6.9 3.2 7.5 3.8 7.5 4.5 C7.5 5.4 6 5.6 6 7" fill="none" stroke="#bfc3ca" stroke-width="0.8"/><circle cx="6" cy="8.7" r="0.55" fill="#bfc3ca"/></svg>
<div class="abs" style="left:11.8px;top:41px;width:52px;height:2px;background:#1b5cf2"></div>
<div class="redbox" style="left:62.0px;top:4.5px"></div>
</div><!--/tcard-->
</body></html>
